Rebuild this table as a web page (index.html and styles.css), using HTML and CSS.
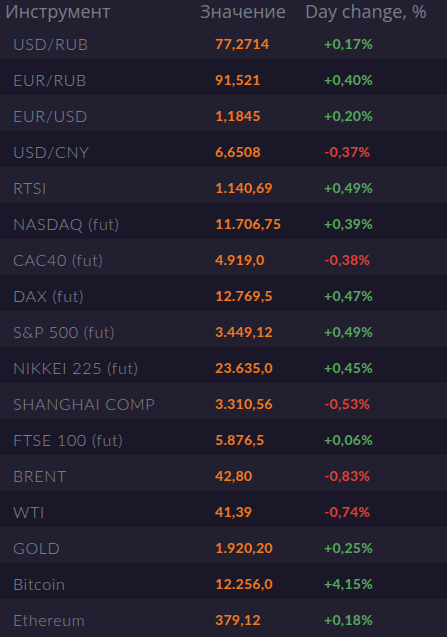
FILE: index.html
```html
<!DOCTYPE html>
<html lang="ru">
<head>
<meta charset="utf-8">
<link rel="stylesheet" href="styles.css">
</head>
<body>
<div class="table">
  <div class="head">
    <span class="h-name">Инструмент</span>
    <span class="h-val">Значение</span>
    <span class="h-chg">Day change, %</span>
  </div>
  <div class="row"><span class="name">USD/RUB</span><span class="val">77,2714</span><span class="chg up">+0,17%</span></div>
  <div class="row"><span class="name">EUR/RUB</span><span class="val">91,521</span><span class="chg up">+0,40%</span></div>
  <div class="row"><span class="name">EUR/USD</span><span class="val">1,1845</span><span class="chg up">+0,20%</span></div>
  <div class="row"><span class="name">USD/CNY</span><span class="val">6,6508</span><span class="chg down">-0,37%</span></div>
  <div class="row"><span class="name">RTSI</span><span class="val">1.140,69</span><span class="chg up">+0,49%</span></div>
  <div class="row"><span class="name">NASDAQ (fut)</span><span class="val">11.706,75</span><span class="chg up">+0,39%</span></div>
  <div class="row"><span class="name">CAC40 (fut)</span><span class="val">4.919,0</span><span class="chg down">-0,38%</span></div>
  <div class="row"><span class="name">DAX (fut)</span><span class="val">12.769,5</span><span class="chg up">+0,47%</span></div>
  <div class="row"><span class="name">S&amp;P 500 (fut)</span><span class="val">3.449,12</span><span class="chg up">+0,49%</span></div>
  <div class="row"><span class="name">NIKKEI 225 (fut)</span><span class="val">23.635,0</span><span class="chg up">+0,45%</span></div>
  <div class="row"><span class="name">SHANGHAI COMP</span><span class="val">3.310,56</span><span class="chg down">-0,53%</span></div>
  <div class="row"><span class="name">FTSE 100 (fut)</span><span class="val">5.876,5</span><span class="chg up">+0,06%</span></div>
  <div class="row"><span class="name">BRENT</span><span class="val">42,80</span><span class="chg down">-0,83%</span></div>
  <div class="row"><span class="name">WTI</span><span class="val">41,39</span><span class="chg down">-0,74%</span></div>
  <div class="row"><span class="name">GOLD</span><span class="val">1.920,20</span><span class="chg up">+0,25%</span></div>
  <div class="row"><span class="name">Bitcoin</span><span class="val">12.256,0</span><span class="chg up">+4,15%</span></div>
  <div class="row"><span class="name">Ethereum</span><span class="val">379,12</span><span class="chg up">+0,18%</span></div>
</div>
</body>
</html>
```
FILE: styles.css
```css
html, body {
  margin: 0;
  padding: 0;
  background: #211f30;
}
.table {
  width: 447px;
  overflow: hidden;
}
.head {
  display: grid;
  grid-template-columns: 195px 105px 1fr;
  height: 23px;
  padding-left: 5px;
  align-items: center;
  font-family: "Open Sans", "DejaVu Sans", sans-serif;
  font-size: 18px;
  color: #7d7a87;
  line-height: 23px;
  white-space: nowrap;
}
.row {
  display: grid;
  grid-template-columns: 202px 109px 1fr;
  height: 36px;
  box-sizing: border-box;
  padding: 5px 0 0 13px;
  align-items: center;
  background: #211f30;
}
.row:nth-of-type(odd) {
  background: #1a1828;
}
.name {
  font-family: "Lato", "Open Sans", sans-serif;
  font-weight: 300;
  font-size: 16px;
  letter-spacing: 0.7px;
  color: #8b8896;
  white-space: nowrap;
}
.val, .chg {
  font-family: "Lato", "Open Sans", sans-serif;
  font-weight: 700;
  font-size: 14px;
  letter-spacing: 0.3px;
}
.val { color: #f27a1f; }
.up { color: #56a95b; }
.down { color: #df4136; }
```
